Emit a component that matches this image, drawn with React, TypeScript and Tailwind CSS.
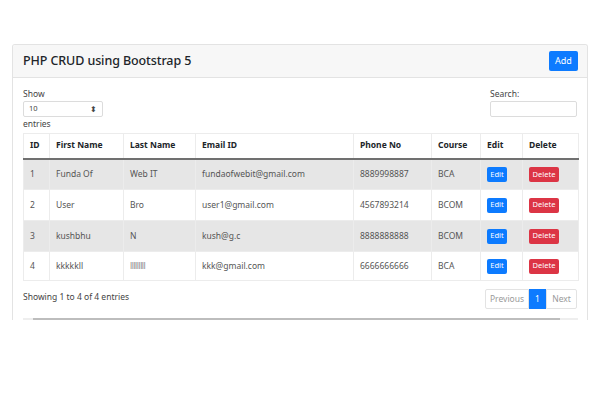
import React from "react";

type Student = {
  id: number;
  first: string;
  last: string;
  email: string;
  phone: string;
  course: string;
};

const STUDENTS: Student[] = [
  { id: 1, first: "Funda Of", last: "Web IT", email: "fundaofwebit@gmail.com", phone: "8889998887", course: "BCA" },
  { id: 2, first: "User", last: "Bro", email: "user1@gmail.com", phone: "4567893214", course: "BCOM" },
  { id: 3, first: "kushbhu", last: "N", email: "kush@g.c", phone: "8888888888", course: "BCOM" },
  { id: 4, first: "kkkkkll", last: "lllllllll", email: "kkk@gmail.com", phone: "6666666666", course: "BCA" },
];

const COLS = [
  { label: "ID", w: "w-[26px]" },
  { label: "First Name", w: "w-[74px]" },
  { label: "Last Name", w: "w-[72px]" },
  { label: "Email ID", w: "w-[158px]" },
  { label: "Phone No", w: "w-[78px]" },
  { label: "Course", w: "w-[49px]" },
  { label: "Edit", w: "w-[42px]" },
  { label: "Delete", w: "w-[56px]" },
];

export default function App() {
  return (
    <div className="h-[400px] w-[600px] bg-white pt-[44px] px-[12px] text-[#212529] [font-family:'Noto_Sans','Open_Sans',sans-serif]">
      <div className="h-[276px] border-x border-t border-[#e3e3e3] rounded-t-[3px] overflow-hidden">
        {/* header */}
        <div className="flex h-[33px] items-center justify-between border-b border-[#e3e3e3] bg-[#f7f7f7] pl-[10px] pr-[9px]">
          <h4 className="text-[12.5px] font-medium leading-none tracking-[-0.1px] text-[#212529]">
            PHP CRUD using Bootstrap 5
          </h4>
          <button type="button" className="h-[20px] w-[29px] rounded-[2px] bg-[#0d7bff] text-[9px] text-white">
            Add
          </button>
        </div>

        <div className="px-[10px] pt-[10px]">
          {/* controls */}
          <div className="flex justify-between text-[8.5px] text-[#444]">
            <div>
              <div className="leading-[12px]">Show</div>
              <div className="mt-[1px] flex h-[16px] w-[80px] items-center justify-between rounded-[2px] border border-[#dcdcdc] px-[5px] text-[7.5px]">
                <span>10</span>
                <span className="text-[8px] leading-none">⬍</span>
              </div>
              <div className="mt-[1px] leading-[12px]">entries</div>
            </div>
            <div>
              <div className="leading-[12px]">Search:</div>
              <div className="mt-[1px] h-[16px] w-[87px] rounded-[2px] border border-[#dcdcdc]" />
            </div>
          </div>

          {/* table */}
          <table className="mt-[3px] w-[555px] table-fixed border-collapse text-[8.5px]">
            <thead>
              <tr className="h-[25px]">
                {COLS.map((c) => (
                  <th
                    key={c.label}
                    className={`${c.w} border border-[#ececec] border-b-[2px] border-b-[#707070] pl-[6px] text-left font-bold text-[#212529]`}
                  >
                    {c.label}
                  </th>
                ))}
              </tr>
            </thead>
            <tbody className="text-[#555]">
              {STUDENTS.map((s, i) => (
                <tr
                  key={s.id}
                  className={`${i === 3 ? "h-[29px]" : "h-[31px]"} ${i % 2 === 0 ? "bg-[#e6e6e6]" : "bg-white"}`}
                >
                  <td className="border border-[#ececec] pl-[6px]">{s.id}</td>
                  <td className="border border-[#ececec] pl-[6px]">{s.first}</td>
                  <td className="border border-[#ececec] pl-[6px]">
                    {s.id === 4 ? <span className="tracking-[-0.5px] text-[#888]">{s.last}</span> : s.last}
                  </td>
                  <td className="border border-[#ececec] pl-[6px]">{s.email}</td>
                  <td className="border border-[#ececec] pl-[6px]">{s.phone}</td>
                  <td className="border border-[#ececec] pl-[6px]">{s.course}</td>
                  <td className="border border-[#ececec] pl-[6px]">
                    <button type="button" className="h-[15px] w-[20px] rounded-[2px] bg-[#0d7bff] text-[7.5px] text-white">
                      Edit
                    </button>
                  </td>
                  <td className="border border-[#ececec] pl-[6px]">
                    <button type="button" className="h-[15px] w-[30px] rounded-[2px] bg-[#dc3545] text-[7.5px] text-white">
                      Delete
                    </button>
                  </td>
                </tr>
              ))}
            </tbody>
          </table>

          {/* footer */}
          <div className="mt-[8px] flex items-start justify-between">
            <div className="pt-[2px] text-[8.5px] text-[#444]">Showing 1 to 4 of 4 entries</div>
            <div className="flex h-[20px] text-[8.5px]">
              <span className="flex w-[44px] items-center justify-center rounded-l-[2px] border border-[#e3e3e3] text-[#9a9a9a]">
                Previous
              </span>
              <span className="flex w-[17px] items-center justify-center bg-[#0d7bff] text-white">1</span>
              <span className="flex w-[31px] items-center justify-center rounded-r-[2px] border border-[#e3e3e3] text-[#9a9a9a]">
                Next
              </span>
            </div>
          </div>

          {/* scrollbar */}
          <div className="mt-[9px] flex h-[2px] w-[555px] bg-[#eeeeee]">
            <div className="ml-[10px] h-[2px] w-[527px] bg-[#bdbdbd]" />
          </div>
        </div>
      </div>
    </div>
  );
}
